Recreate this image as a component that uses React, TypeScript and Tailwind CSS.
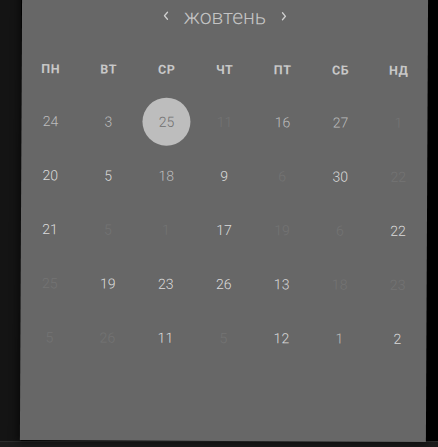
import React from "react";

type Tone = "b" | "m" | "f" | "s";

const rows: [string, Tone][][] = [
  [["24", "m"], ["3", "m"], ["25", "s"], ["11", "f"], ["16", "m"], ["27", "m"], ["1", "f"]],
  [["20", "b"], ["5", "b"], ["18", "m"], ["9", "b"], ["6", "f"], ["30", "b"], ["22", "f"]],
  [["21", "b"], ["5", "f"], ["1", "f"], ["17", "b"], ["19", "f"], ["6", "f"], ["22", "b"]],
  [["25", "f"], ["19", "b"], ["23", "b"], ["26", "b"], ["13", "b"], ["18", "f"], ["23", "f"]],
  [["5", "f"], ["26", "f"], ["11", "b"], ["5", "f"], ["12", "b"], ["1", "m"], ["2", "b"]],
];

const days = ["ПН", "ВТ", "СР", "ЧТ", "ПТ", "СБ", "НД"];

function Chevron({ dir }: { dir: "l" | "r" }) {
  return (
    <svg width="8" height="10" viewBox="0 0 8 10" className="block">
      <polyline
        points={dir === "l" ? "5.5,1.5 2.5,5 5.5,8.5" : "2.5,1.5 5.5,5 2.5,8.5"}
        fill="none"
        stroke="#cfcfcf"
        strokeWidth="1.3"
        strokeLinecap="round"
        strokeLinejoin="round"
      />
    </svg>
  );
}

function Cell({ v, t }: { v: string; t: Tone }) {
  if (t === "s") {
    return (
      <div className="flex h-[54px] items-center justify-center">
        <div className="flex h-[48px] w-[48px] items-center justify-center rounded-full bg-[#bdbdbd] text-[14px] font-light text-[#6f6f6f]">
          {v}
        </div>
      </div>
    );
  }
  const cls =
    t === "b" ? "text-[#dcdcdc]" : t === "m" ? "text-[#bdbdbd]" : "text-[#747474]";
  return (
    <div className={`flex h-[54px] items-center justify-center text-[14px] font-light ${cls}`}>
      {v}
    </div>
  );
}

export default function App() {
  return (
    <div
      className="relative flex h-[447px] w-[438px] flex-col overflow-hidden bg-black"
      style={{ fontFamily: "Roboto, 'Noto Sans', sans-serif" }}
    >
      <div className="flex h-[441px] w-full">
        <div className="h-full w-[21px] bg-[#141414]" />
        <div className="-mt-[10px] flex h-[451px] w-[406px] rotate-[0.28deg] flex-col bg-[#676767] pt-[10px] shadow-[0_0_8px_2px_rgba(0,0,0,0.6)]">
          <div className="flex h-[34px] items-center justify-center gap-[12px]">
            <div className="-mt-[3px] mr-[2px]">
              <Chevron dir="l" />
            </div>
            <div className="text-[21px] font-light leading-none text-[#c4c4c4]">жовтень</div>
            <div className="-mt-[3px] ml-[2px]">
              <Chevron dir="r" />
            </div>
          </div>
          <div className="mt-[18px] grid h-[36px] grid-cols-7">
            {days.map((d) => (
              <div
                key={d}
                className="flex items-center justify-center text-[12.5px] font-bold tracking-[0.6px] text-[#c8c8c8]"
              >
                {d}
              </div>
            ))}
          </div>
          <div className="mt-[7px] flex flex-col">
            {rows.map((r, i) => (
              <div key={i} className="grid grid-cols-7">
                {r.map(([v, t], j) => (
                  <Cell key={j} v={v} t={t} />
                ))}
              </div>
            ))}
          </div>
        </div>
        <div className="flex-1 bg-black" />
      </div>
      <div className="h-[6px] w-full border-t border-[#2c2c2c] bg-[#1c1c1c]" />
    </div>
  );
}
